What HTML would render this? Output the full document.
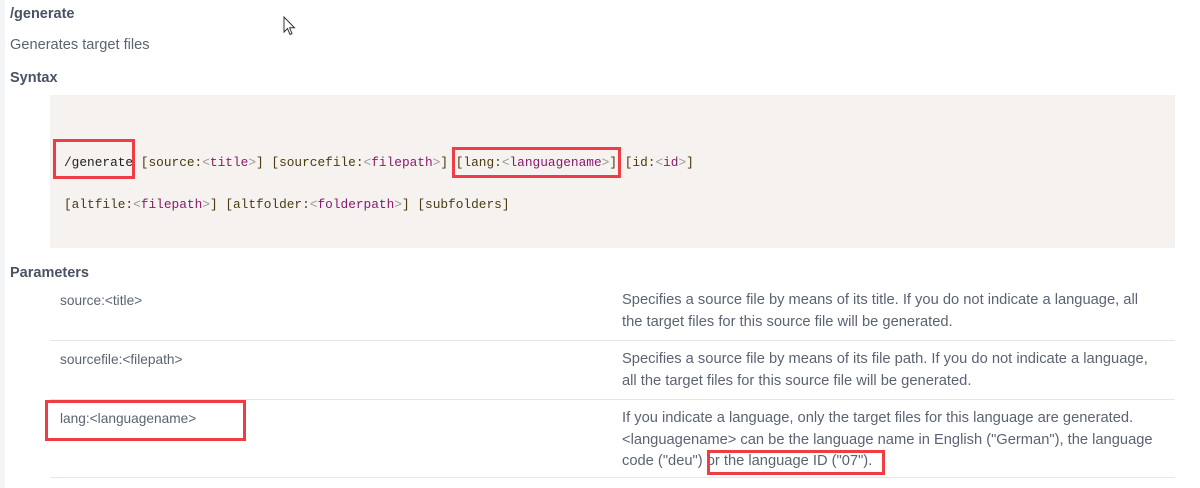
<!DOCTYPE html>
<html><head><meta charset="utf-8"><style>
body{margin:0;width:1200px;height:488px;background:#fff;position:relative;overflow:hidden;font-family:"Liberation Sans",sans-serif;color:#5b6373;}
.strip{position:absolute;left:0;top:0;width:5px;height:488px;background:#f3f4f6}
.a{position:absolute;white-space:nowrap}
h{font-weight:bold;color:#4a5263;font-size:14.5px}
.t{font-size:14px;line-height:21.5px}
.d{font-size:14.7px;line-height:21.5px}
.code{position:absolute;left:50px;top:95px;width:1125px;height:153px;background:#f5f2ef}
.m{font-family:"Liberation Mono",monospace;font-size:12.8px;color:#222}
.b{color:#4a3b10}.g{color:#999}.p{color:#8b1a6b}
.sep{position:absolute;left:50px;width:1125px;height:1px;background:#e3e6ea}
.r{position:absolute;border:3px solid #ee3d44}
</style></head><body>
<div class="strip"></div>
<div class="a" style="left:10px;top:5px"><h>/generate</h></div>
<div class="a t" style="left:10px;top:35px;font-size:14.6px">Generates target files</div>
<div class="a" style="left:10px;top:69px"><h>Syntax</h></div>
<div class="code"></div>
<div class="a m" style="left:64px;top:155px">/generate <span class="b">[source:</span><span class="g">&lt;</span><span class="p">title</span><span class="g">&gt;</span><span class="b">]</span> <span class="b">[sourcefile:</span><span class="g">&lt;</span><span class="p">filepath</span><span class="g">&gt;</span><span class="b">]</span> <span class="b">[lang:</span><span class="g">&lt;</span><span class="p">languagename</span><span class="g">&gt;</span><span class="b">]</span> <span class="b">[id:</span><span class="g">&lt;</span><span class="p">id</span><span class="g">&gt;</span><span class="b">]</span></div>
<div class="a m" style="left:64px;top:197px"><span class="b">[altfile:</span><span class="g">&lt;</span><span class="p">filepath</span><span class="g">&gt;</span><span class="b">]</span> <span class="b">[altfolder:</span><span class="g">&lt;</span><span class="p">folderpath</span><span class="g">&gt;</span><span class="b">]</span> <span class="b">[subfolders]</span></div>
<div class="a" style="left:10px;top:264px"><h>Parameters</h></div>
<div class="a t" style="left:60px;top:290px;font-size:13.7px">source:&lt;title&gt;</div>
<div class="a d" style="left:622px;top:290px">Specifies a source file by means of its title. If you do not indicate a language, all<br>the target files for this source file will be generated.</div>
<div class="sep" style="top:340px"></div>
<div class="a t" style="left:60px;top:349px;font-size:13.7px">sourcefile:&lt;filepath&gt;</div>
<div class="a d" style="left:622px;top:349px">Specifies a source file by means of its file path. If you do not indicate a language,<br>all the target files for this source file will be generated.</div>
<div class="sep" style="top:399px"></div>
<div class="a t" style="left:60px;top:408px;font-size:13.7px">lang:&lt;languagename&gt;</div>
<div class="a d" style="left:622px;top:408px">If you indicate a language, only the target files for this language are generated.<br>&lt;languagename&gt; can be the language name in English ("German"), the language<br>code ("deu") or the language ID ("07").</div>
<div class="sep" style="top:477px"></div>
<div class="r" style="left:53px;top:139px;width:76px;height:34px"></div>
<div class="r" style="left:452px;top:147px;width:163px;height:25px"></div>
<div class="r" style="left:45px;top:400px;width:195px;height:35px"></div>
<div class="r" style="left:707px;top:450px;width:172px;height:19px"></div>
<svg class="a" style="left:283px;top:16px" width="14" height="20" viewBox="0 0 14 20"><path d="M1 1 L1 16 L4.5 12.5 L7 18.5 L9 17.6 L6.6 11.8 L11.5 11.8 Z" fill="#fff" stroke="#333" stroke-width="1"/></svg>
</body></html>
